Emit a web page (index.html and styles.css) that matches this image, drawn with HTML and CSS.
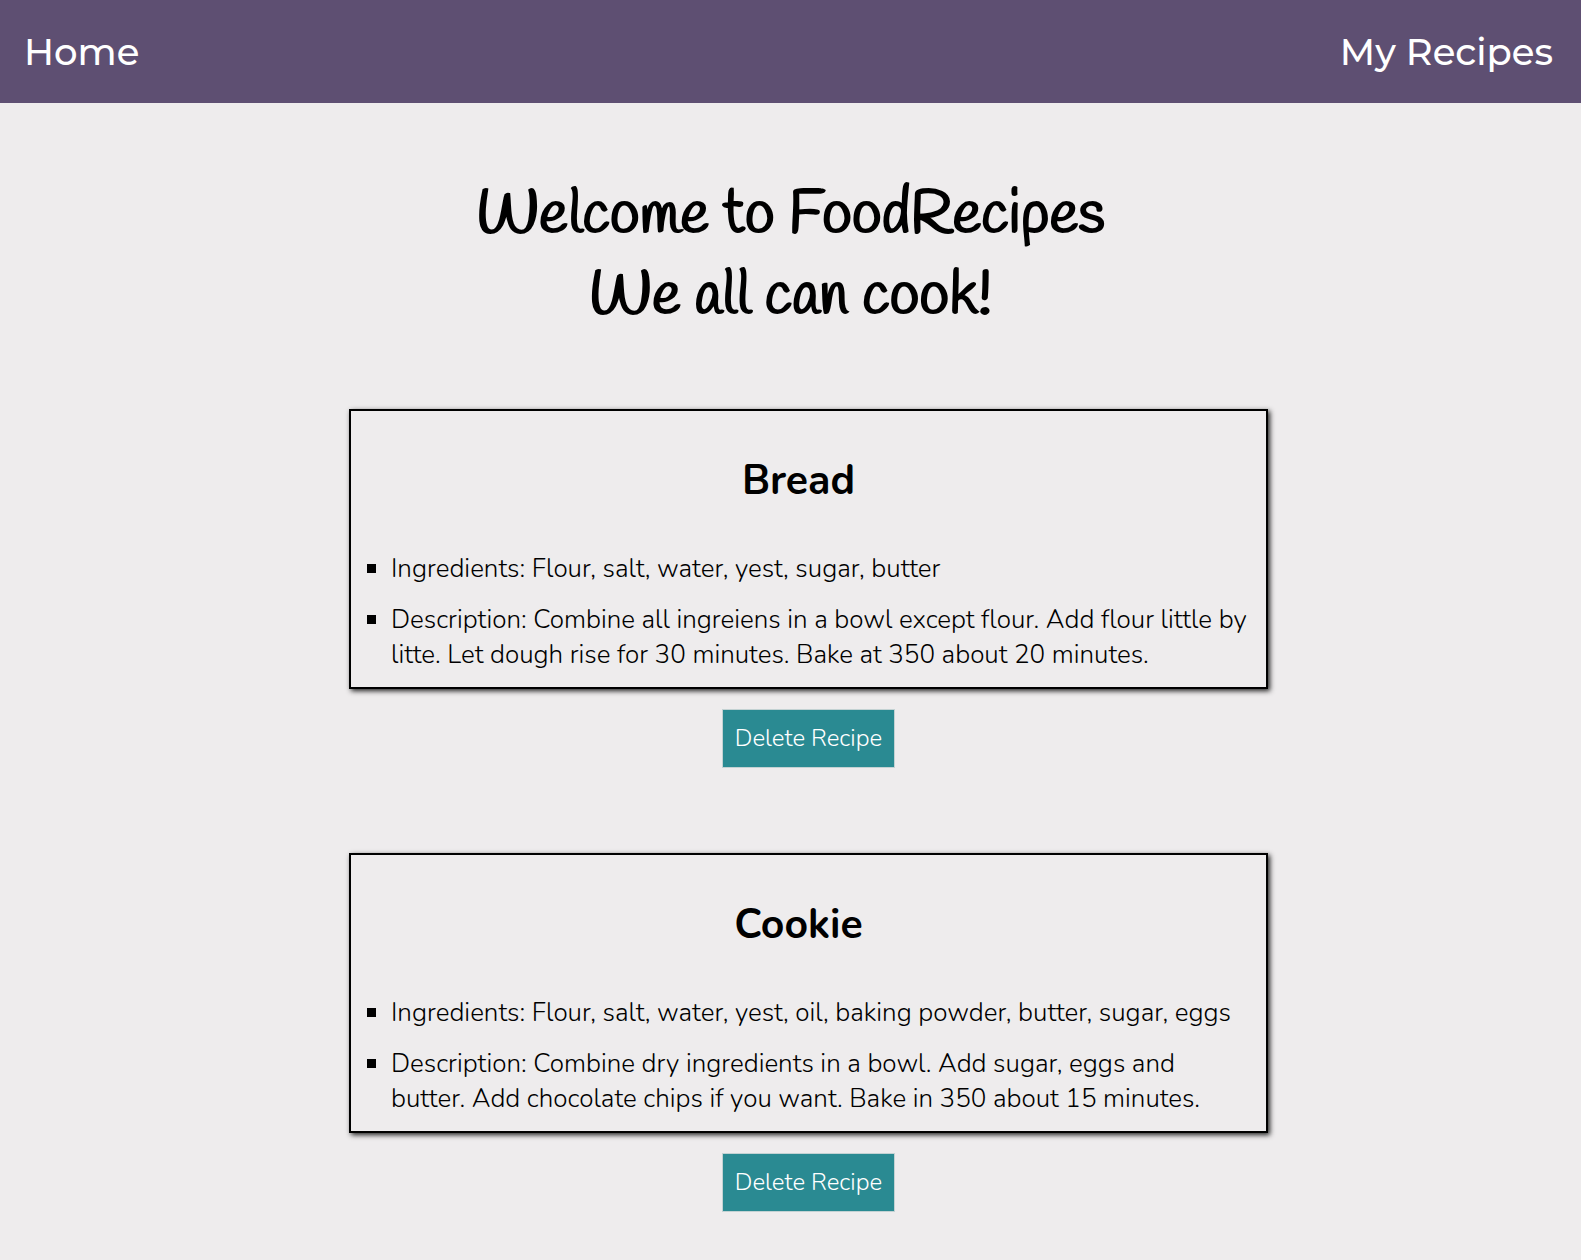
FILE: index.html
```html
<!DOCTYPE html>
<html lang="en">
<head>
  <meta charset="utf-8">
  <meta name="viewport" content="width=device-width, initial-scale=1">
  <title>FoodRecipes</title>
  <link rel="stylesheet" href="styles.css">
</head>
<body>
  <header>
    <nav class="navbar">
      <a class="nav-link" href="#home">Home</a>
      <a class="nav-link" href="#my-recipes">My Recipes</a>
    </nav>
  </header>
  <h1 class="welcome">Welcome to FoodRecipes<br>We all can cook!</h1>
  <main class="recipes">
    <article class="recipe">
      <div class="card">
        <h2 class="recipe-name">Bread</h2>
        <ul class="details">
          <li>Ingredients: Flour, salt, water, yest, sugar, butter</li>
          <li>Description: Combine all ingreiens in a bowl except flour. Add flour little by litte. Let dough rise for 30 minutes. Bake at 350 about 20 minutes.</li>
        </ul>
      </div>
      <button class="delete" type="button">Delete Recipe</button>
    </article>
    <article class="recipe">
      <div class="card">
        <h2 class="recipe-name">Cookie</h2>
        <ul class="details">
          <li>Ingredients: Flour, salt, water, yest, oil, baking powder, butter, sugar, eggs</li>
          <li>Description: Combine dry ingredients in a bowl. Add sugar, eggs and butter. Add chocolate chips if you want. Bake in 350 about 15 minutes.</li>
        </ul>
      </div>
      <button class="delete" type="button">Delete Recipe</button>
    </article>
  </main>
</body>
</html>
```
FILE: styles.css
```css
* {
  box-sizing: border-box;
}

body {
  margin: 0;
  background: #eeeced;
  color: #000;
  font-family: Nunito, Lato, sans-serif;
  font-size: 26px;
  font-weight: 300;
  line-height: 35px;
}

.navbar {
  display: flex;
  justify-content: space-between;
  align-items: center;
  padding: 28px 28px 27px 24px;
  background: #5e4f72;
}

.nav-link {
  color: #fff;
  font-family: Montserrat, Inter, sans-serif;
  font-size: 37px;
  font-weight: 500;
  line-height: 48px;
  text-decoration: none;
}

.welcome {
  margin: 72px 0;
  font-family: Handlee, Lato, sans-serif;
  font-size: 61px;
  font-weight: 700;
  line-height: 81px;
  text-align: center;
}

.recipes {
  display: flex;
  flex-direction: column;
  gap: 85px;
  padding: 0 0 48px 36px;
}

.recipe {
  display: flex;
  flex-direction: column;
  align-items: center;
  gap: 20px;
}

.card {
  width: 100%;
  max-width: 919px;
  padding: 40px 16px 15px 0;
  border: 2px solid #000;
  box-shadow: 2px 2px 5px #222;
}

.recipe-name {
  margin: 0 4px 40px 0;
  font-size: 41px;
  font-weight: 700;
  line-height: 60px;
  text-align: center;
}

.details {
  display: flex;
  flex-direction: column;
  gap: 16px;
  margin: 0;
  padding-left: 40px;
  list-style: square;
}

.delete {
  padding: 10px 12px;
  border: 1px solid #c3d2d3;
  background: #2a8a92;
  color: #fff;
  font: inherit;
  font-size: 24px;
  line-height: 37px;
}
```
